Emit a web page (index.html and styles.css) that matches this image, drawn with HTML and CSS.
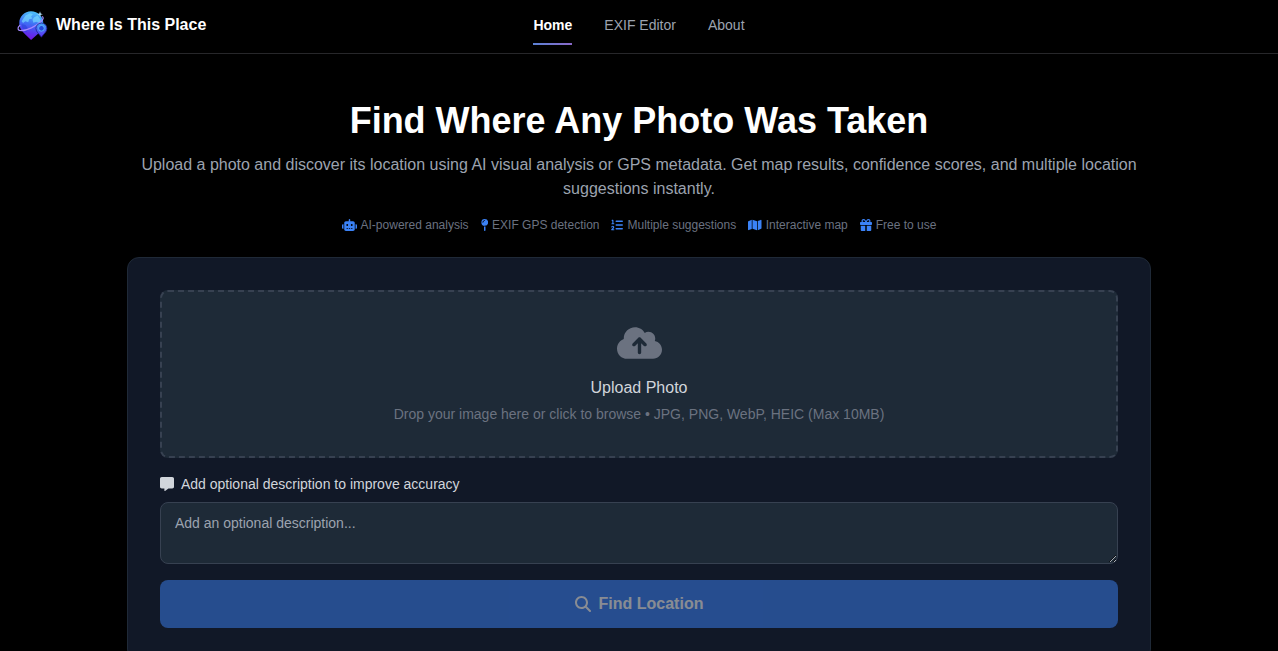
FILE: index.html
```html
<!DOCTYPE html>
<html lang="en">

<head>
    <meta charset="UTF-8">
    <meta name="viewport" content="width=device-width, initial-scale=1.0">
    <title>Where Is This Place</title>
    <link rel="stylesheet" href="styles.css">
</head>

<body>
    <header class="header">
        <a class="brand" href="#">
            <svg class="logo" viewBox="-1 -1 34 34" aria-hidden="true">
                <defs>
                    <linearGradient id="globe" x1="0.6" y1="0" x2="0.4" y2="1">
                        <stop offset="0" stop-color="#4fc3fb" />
                        <stop offset="0.45" stop-color="#3f6df5" />
                        <stop offset="0.75" stop-color="#5a35ee" />
                        <stop offset="1" stop-color="#7a12e0" />
                    </linearGradient>
                    <linearGradient id="pin" x1="0.5" y1="0" x2="0.5" y2="1">
                        <stop offset="0" stop-color="#3fa4fa" />
                        <stop offset="1" stop-color="#5a2df0" />
                    </linearGradient>
                </defs>
                <path fill="url(#globe)" d="M15 1.500C8 1.500 2.500 7 2.500 14c0 6 3.500 9.500 7 12.500L15 32l6-5.500C25 23.500 28 20 28 14 28 7 22.200 1.500 15 1.500z" />
                <path fill="#7fe3ff" opacity="0.6" d="M9 6l5-2.500 3 1-2 2.500 1.500 2-3.500 1-1 3-3-1-2.500 2L5 12zM18 8l4-2 3.500 5-2 3-3-1.500-3 1-1-3z" />
                <path fill="#2744d8" opacity="0.6" d="M5 15l4 1 3 4-2 4c-3-2-5-5-5-9z" />
                <path fill="none" stroke="#a58bff" stroke-width="1.200" d="M3.500 16C0 19 .5 22 4.500 22c6 0 16-4.500 21.500-10 2.500-2.600 2.500-4.500.5-5" />
                <path fill="url(#pin)" stroke="#221a8c" stroke-width="0.800" d="M26 14c-3.500 0-5.800 2.500-5.800 5.700 0 3.800 3.500 5.800 5.800 9.300 2.300-3.500 5.800-5.500 5.800-9.300C31.800 16.500 29.500 14 26 14z" />
                <circle cx="26" cy="19.500" r="3" fill="#2347d9" stroke="#66c8ff" stroke-width="0.800" />
                <path fill="#b9e8ff" d="M24.500 1.500l.7 2.300 2.300.7-2.300.7-.7 2.300-.7-2.300-2.300-.7 2.300-.7z" />
            </svg>
            <span>Where Is This Place</span>
        </a>
        <nav class="nav">
            <a class="nav-link active" href="#">Home</a>
            <a class="nav-link" href="#">EXIF Editor</a>
            <a class="nav-link" href="#">About</a>
        </nav>
    </header>

    <main class="container">
        <section class="hero">
            <h1>Find Where Any Photo Was Taken</h1>
            <p class="subtitle">Upload a photo and discover its location using AI visual analysis or GPS metadata. Get map results, confidence scores, and multiple location suggestions instantly.</p>
            <ul class="features">
                <li>
                    <svg class="icon" viewBox="0 0 640 512" aria-hidden="true"><path d="M320 0c17.7 0 32 14.3 32 32V96H472c39.8 0 72 32.2 72 72V440c0 39.8-32.2 72-72 72H168c-39.8 0-72-32.2-72-72V168c0-39.8 32.2-72 72-72H288V32c0-17.7 14.3-32 32-32zM208 384c-8.8 0-16 7.2-16 16s7.2 16 16 16h32c8.8 0 16-7.2 16-16s-7.2-16-16-16H208zm96 0c-8.8 0-16 7.2-16 16s7.2 16 16 16h32c8.8 0 16-7.2 16-16s-7.2-16-16-16H304zm96 0c-8.8 0-16 7.2-16 16s7.2 16 16 16h32c8.8 0 16-7.2 16-16s-7.2-16-16-16H400zM264 256a40 40 0 1 0-80 0 40 40 0 1 0 80 0zm152 40a40 40 0 1 0 0-80 40 40 0 1 0 0 80zM48 224H64V416H48c-26.5 0-48-21.5-48-48V272c0-26.5 21.5-48 48-48zm544 0c26.5 0 48 21.5 48 48v96c0 26.5-21.5 48-48 48H576V224h16z" /></svg>
                    AI-powered analysis
                </li>
                <li>
                    <svg class="icon" viewBox="0 0 320 512" aria-hidden="true"><path d="M16 144a144 144 0 1 1 288 0A144 144 0 1 1 16 144zM160 80c8.8 0 16-7.2 16-16s-7.2-16-16-16c-53 0-96 43-96 96c0 8.8 7.2 16 16 16s16-7.2 16-16c0-35.3 28.7-64 64-64zM128 480V317.1c10.4 1.9 21.1 2.9 32 2.9s21.6-1 32-2.9V480c0 17.7-14.3 32-32 32s-32-14.3-32-32z" /></svg>
                    EXIF GPS detection
                </li>
                <li>
                    <svg class="icon" viewBox="0 0 512 512" aria-hidden="true"><path d="M24 56c0-13.3 10.7-24 24-24H80c13.3 0 24 10.7 24 24V176h16c13.3 0 24 10.7 24 24s-10.7 24-24 24H40c-13.3 0-24-10.7-24-24s10.7-24 24-24H56V80H48C34.7 80 24 69.3 24 56zM86.7 341.2c-6.5-7.4-18.3-6.9-24 1.2L51.5 357.9c-7.7 10.8-22.7 13.3-33.5 5.6s-13.3-22.7-5.6-33.5l11.1-15.6c23.7-33.2 72.3-35.6 99.2-4.9c21.3 24.4 20.8 60.9-1.1 84.7L86.8 432H120c13.3 0 24 10.7 24 24s-10.7 24-24 24H32c-9.5 0-18.2-5.6-22-14.4s-2.1-18.9 4.3-25.9l72-78c5.3-5.8 5.4-14.6 .3-20.5zM224 64H480c17.7 0 32 14.3 32 32s-14.3 32-32 32H224c-17.7 0-32-14.3-32-32s14.3-32 32-32zm0 160H480c17.7 0 32 14.3 32 32s-14.3 32-32 32H224c-17.7 0-32-14.3-32-32s14.3-32 32-32zm0 160H480c17.7 0 32 14.3 32 32s-14.3 32-32 32H224c-17.7 0-32-14.3-32-32s14.3-32 32-32z" /></svg>
                    Multiple suggestions
                </li>
                <li>
                    <svg class="icon" viewBox="0 0 576 512" aria-hidden="true"><path d="M384 476.1L192 421.2V35.9L384 90.8V476.1zm32-1.2V88.4L543.1 37.5c15.8-6.3 32.9 5.3 32.9 22.3V394.6c0 9.8-6 18.6-15.1 22.3L416 474.8zM15.1 95.1L160 37.2V423.6L32.9 474.5C17.1 480.8 0 469.2 0 452.2V117.4c0-9.8 6-18.6 15.1-22.3z" /></svg>
                    Interactive map
                </li>
                <li>
                    <svg class="icon" viewBox="0 0 512 512" aria-hidden="true"><path d="M190.5 68.8L225.3 128H224 152c-22.1 0-40-17.9-40-40s17.9-40 40-40h2.2c14.9 0 28.8 7.9 36.3 20.8zM64 88c0 14.4 3.5 28 9.6 40H32c-17.7 0-32 14.3-32 32v64c0 17.7 14.3 32 32 32H480c17.7 0 32-14.3 32-32V160c0-17.7-14.3-32-32-32H438.4c6.1-12 9.6-25.6 9.6-40c0-48.6-39.4-88-88-88h-2.2c-31.9 0-61.5 16.9-77.7 44.4L256 85.5l-24.1-41C215.7 16.9 186.1 0 154.2 0H152C103.4 0 64 39.4 64 88zm336 0c0 22.1-17.9 40-40 40H288h-1.3l34.8-59.2C329.1 55.9 342.9 48 357.8 48H360c22.1 0 40 17.9 40 40zM32 288V464c0 26.5 21.5 48 48 48H224V288H32zM288 512H432c26.5 0 48-21.5 48-48V288H288V512z" /></svg>
                    Free to use
                </li>
            </ul>
        </section>

        <form class="card">
            <button type="button" class="upload" id="upload">
                <svg class="upload-icon" viewBox="0 0 640 512" aria-hidden="true"><path d="M144 480C64.5 480 0 415.5 0 336c0-62.8 40.2-116.2 96.2-135.9c-.1-2.7-.2-5.4-.2-8.1c0-88.4 71.6-160 160-160c59.3 0 111 32.2 138.7 80.2C409.9 102 428.3 96 448 96c53 0 96 43 96 96c0 12.2-2.3 23.8-6.4 34.6C596 238.4 640 290.1 640 352c0 70.7-57.3 128-128 128H144zm79-217c-9.4 9.4-9.4 24.6 0 33.9s24.6 9.4 33.9 0l39-39V392c0 13.3 10.7 24 24 24s24-10.7 24-24V257.9l39 39c9.4 9.4 24.6 9.4 33.9 0s9.4-24.6 0-33.9l-80-80c-9.4-9.4-24.6-9.4-33.9 0l-80 80z" /></svg>
                <span class="upload-title">Upload Photo</span>
                <span class="upload-hint">Drop your image here or click to browse • JPG, PNG, WebP, HEIC (Max 10MB)</span>
            </button>

            <label class="label" for="description">
                <svg class="icon" viewBox="0 0 512 512" aria-hidden="true"><path d="M64 0C28.7 0 0 28.7 0 64V352c0 35.3 28.7 64 64 64h96v80c0 6.1 3.4 11.6 8.8 14.3s11.9 2.1 16.8-1.5L309.3 416H448c35.3 0 64-28.7 64-64V64c0-35.3-28.7-64-64-64H64z" /></svg>
                Add optional description to improve accuracy
            </label>
            <textarea class="description" id="description" rows="2" placeholder="Add an optional description..."></textarea>

            <button type="submit" class="submit-btn" disabled>
                <svg class="icon" viewBox="0 0 512 512" aria-hidden="true"><path d="M416 208c0 45.9-14.9 88.3-40 122.7L502.6 457.4c12.5 12.5 12.5 32.8 0 45.3s-32.8 12.5-45.3 0L330.7 376c-34.4 25.2-76.8 40-122.7 40C93.1 416 0 322.9 0 208S93.1 0 208 0S416 93.1 416 208zM208 352a144 144 0 1 0 0-288 144 144 0 1 0 0 288z" /></svg>
                Find Location
            </button>
        </form>
    </main>
</body>

</html>
```

FILE: styles.css
```css
* {
    box-sizing: border-box;
}

body {
    margin: 0;
    background-color: #000;
    color: #fff;
    font-family: "Liberation Sans", Arial, Helvetica, sans-serif;
}

.header {
    display: grid;
    grid-template-columns: 1fr auto 1fr;
    align-items: center;
    padding: 7px 16px 8px;
    border-bottom: 1px solid #27272a;
}

.brand {
    display: flex;
    align-items: center;
    gap: 8px;
    padding-bottom: 2px;
    color: #fff;
    font-size: 16px;
    font-weight: bold;
    text-decoration: none;
}

.logo {
    width: 32px;
    height: 32px;
}

.nav {
    display: flex;
    gap: 32px;
}

.nav-link {
    padding: 8px 0;
    border-bottom: 2px solid transparent;
    color: #9ca3af;
    font-size: 14px;
    line-height: 20px;
    text-decoration: none;
}

.nav-link.active {
    border-image: linear-gradient(90deg, #667eea, #764ba2) 1;
    border-image: linear-gradient(90deg, #5b83d6, #8a68c8) 1;
    color: #fff;
    font-weight: bold;
}

.container {
    max-width: 1024px;
    margin: 0 auto;
    padding: 44px 0 32px;
}

.hero {
    margin-bottom: 23px;
    text-align: center;
}

h1 {
    margin: 0 0 10px;
    font-size: 36px;
    line-height: 45px;
}

.subtitle {
    margin: 0 0 15px;
    color: #9ca3af;
    font-size: 16px;
    line-height: 24px;
}

.features {
    display: flex;
    flex-wrap: wrap;
    justify-content: center;
    gap: 12px;
    margin: 0;
    padding: 0;
    color: #6b7280;
    font-size: 12px;
    line-height: 18px;
    list-style: none;
}

.features li {
    display: flex;
    align-items: center;
    gap: 4px;
}

.icon {
    height: 1em;
    fill: currentColor;
}

.features .icon {
    color: #3b82f6;
}

.card {
    display: flex;
    flex-direction: column;
    padding: 32px;
    background-color: #111827;
    border: 1px solid #1f2937;
    border-radius: 12px;
}

.upload {
    display: flex;
    flex-direction: column;
    align-items: center;
    margin-bottom: 16px;
    padding: 33px 32px 32px;
    background-color: #1e2a37;
    border: 2px dashed #374151;
    border-radius: 8px;
    font-family: inherit;
    cursor: pointer;
}

.upload:hover {
    border-color: #3b82f6;
}

.upload-icon {
    height: 36px;
    margin-bottom: 16px;
    fill: #6b7280;
}

.upload-title {
    margin-bottom: 5px;
    color: #d1d5db;
    font-size: 16px;
    line-height: 22px;
}

.upload-hint {
    color: #6b7280;
    font-size: 14px;
    line-height: 20px;
}

.label {
    display: flex;
    align-items: center;
    gap: 7px;
    margin-bottom: 8px;
    color: #d1d5db;
    font-size: 14px;
    line-height: 20px;
}

.description {
    margin-bottom: 16px;
    padding: 10px 14px;
    background-color: #1e2a37;
    border: 1px solid #374151;
    border-radius: 8px;
    color: #fff;
    font-family: inherit;
    font-size: 14px;
    line-height: 20px;
    resize: vertical;
}

.description::placeholder {
    color: #9ca3af;
}

.submit-btn {
    display: flex;
    justify-content: center;
    align-items: center;
    gap: 8px;
    padding: 12px;
    background-color: #3b82f6;
    border: none;
    border-radius: 8px;
    color: #fff;
    font-family: inherit;
    font-size: 16px;
    font-weight: bold;
    line-height: 24px;
    cursor: pointer;
}

.submit-btn:disabled {
    opacity: 0.5;
    cursor: not-allowed;
}
```
